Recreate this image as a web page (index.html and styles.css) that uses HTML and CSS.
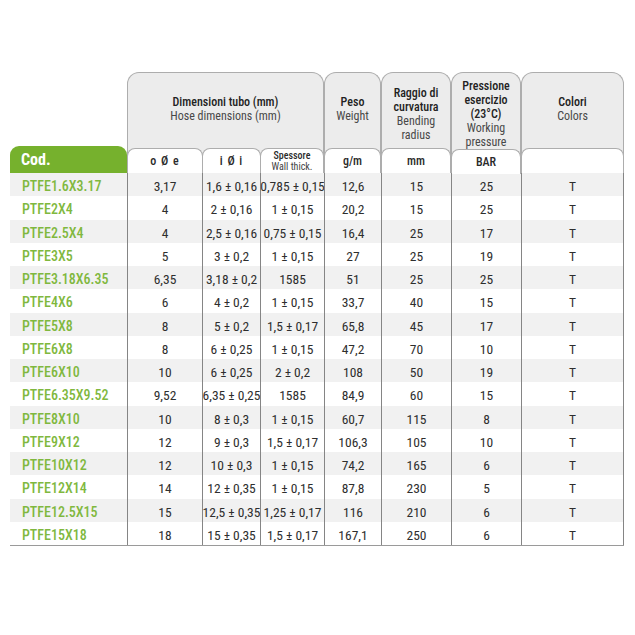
FILE: index.html
```html
<!DOCTYPE html>
<html lang="it">
<head>
<meta charset="utf-8">
<title>PTFE</title>
<link rel="stylesheet" href="styles.css">
</head>
<body>
<div class="sheet">
  <div class="head">
    <div class="cod-cell"><div class="cod">Cod.</div></div>
    <div class="grp">
      <div class="title t2"><b>Dimensioni tubo (mm)</b><span>Hose dimensions (mm)</span></div>
      <div class="subs">
        <div class="sub s-oe">o Ø e</div>
        <div class="sub s-ii">i Ø i</div>
        <div class="sub s-sp small"><b>Spessore</b><span>Wall thick.</span></div>
      </div>
    </div>
    <div class="grp">
      <div class="title t2"><b>Peso</b><span>Weight</span></div>
      <div class="subs"><div class="sub s-full">g/m</div></div>
    </div>
    <div class="grp">
      <div class="title t4"><b>Raggio di</b><b>curvatura</b><span>Bending</span><span>radius</span></div>
      <div class="subs"><div class="sub s-full">mm</div></div>
    </div>
    <div class="grp">
      <div class="title t5"><b>Pressione</b><b>esercizio</b><b>(23°C)</b><span>Working</span><span>pressure</span></div>
      <div class="subs"><div class="sub s-full">BAR</div></div>
    </div>
    <div class="grp">
      <div class="title t2"><b>Colori</b><span>Colors</span></div>
      <div class="subs"><div class="sub s-full"></div></div>
    </div>
  </div>
  <div class="body">
    <div class="row"><div class="c code">PTFE1.6X3.17</div><div class="c">3,17</div><div class="c">1,6 ± 0,16</div><div class="c">0,785 ± 0,15</div><div class="c">12,6</div><div class="c">15</div><div class="c">25</div><div class="c">T</div></div>
    <div class="row"><div class="c code">PTFE2X4</div><div class="c">4</div><div class="c">2 ± 0,16</div><div class="c">1 ± 0,15</div><div class="c">20,2</div><div class="c">15</div><div class="c">25</div><div class="c">T</div></div>
    <div class="row"><div class="c code">PTFE2.5X4</div><div class="c">4</div><div class="c">2,5 ± 0,16</div><div class="c">0,75 ± 0,15</div><div class="c">16,4</div><div class="c">25</div><div class="c">17</div><div class="c">T</div></div>
    <div class="row"><div class="c code">PTFE3X5</div><div class="c">5</div><div class="c">3 ± 0,2</div><div class="c">1 ± 0,15</div><div class="c">27</div><div class="c">25</div><div class="c">19</div><div class="c">T</div></div>
    <div class="row"><div class="c code">PTFE3.18X6.35</div><div class="c">6,35</div><div class="c">3,18 ± 0,2</div><div class="c">1585</div><div class="c">51</div><div class="c">25</div><div class="c">25</div><div class="c">T</div></div>
    <div class="row"><div class="c code">PTFE4X6</div><div class="c">6</div><div class="c">4 ± 0,2</div><div class="c">1 ± 0,15</div><div class="c">33,7</div><div class="c">40</div><div class="c">15</div><div class="c">T</div></div>
    <div class="row"><div class="c code">PTFE5X8</div><div class="c">8</div><div class="c">5 ± 0,2</div><div class="c">1,5 ± 0,17</div><div class="c">65,8</div><div class="c">45</div><div class="c">17</div><div class="c">T</div></div>
    <div class="row"><div class="c code">PTFE6X8</div><div class="c">8</div><div class="c">6 ± 0,25</div><div class="c">1 ± 0,15</div><div class="c">47,2</div><div class="c">70</div><div class="c">10</div><div class="c">T</div></div>
    <div class="row"><div class="c code">PTFE6X10</div><div class="c">10</div><div class="c">6 ± 0,25</div><div class="c">2 ± 0,2</div><div class="c">108</div><div class="c">50</div><div class="c">19</div><div class="c">T</div></div>
    <div class="row"><div class="c code">PTFE6.35X9.52</div><div class="c">9,52</div><div class="c">6,35 ± 0,25</div><div class="c">1585</div><div class="c">84,9</div><div class="c">60</div><div class="c">15</div><div class="c">T</div></div>
    <div class="row"><div class="c code">PTFE8X10</div><div class="c">10</div><div class="c">8 ± 0,3</div><div class="c">1 ± 0,15</div><div class="c">60,7</div><div class="c">115</div><div class="c">8</div><div class="c">T</div></div>
    <div class="row"><div class="c code">PTFE9X12</div><div class="c">12</div><div class="c">9 ± 0,3</div><div class="c">1,5 ± 0,17</div><div class="c">106,3</div><div class="c">105</div><div class="c">10</div><div class="c">T</div></div>
    <div class="row"><div class="c code">PTFE10X12</div><div class="c">12</div><div class="c">10 ± 0,3</div><div class="c">1 ± 0,15</div><div class="c">74,2</div><div class="c">165</div><div class="c">6</div><div class="c">T</div></div>
    <div class="row"><div class="c code">PTFE12X14</div><div class="c">14</div><div class="c">12 ± 0,35</div><div class="c">1 ± 0,15</div><div class="c">87,8</div><div class="c">230</div><div class="c">5</div><div class="c">T</div></div>
    <div class="row"><div class="c code">PTFE12.5X15</div><div class="c">15</div><div class="c">12,5 ± 0,35</div><div class="c">1,25 ± 0,17</div><div class="c">116</div><div class="c">210</div><div class="c">6</div><div class="c">T</div></div>
    <div class="row"><div class="c code">PTFE15X18</div><div class="c">18</div><div class="c">15 ± 0,35</div><div class="c">1,5 ± 0,17</div><div class="c">167,1</div><div class="c">250</div><div class="c">6</div><div class="c">T</div></div>
  </div>
</div>
</body>
</html>
```
FILE: styles.css
```css
html, body {
  margin: 0;
  padding: 0;
  background: #ffffff;
}
body {
  font-family: "Roboto Condensed", "Liberation Sans Narrow", "Roboto", sans-serif;
  font-stretch: condensed;
  color: #333333;
}
.sheet {
  padding: 72px 0 0 10px;
  width: 614px;
}
.head {
  display: grid;
  grid-template-columns: 117px 197px 57px 70px 70px 103px;
  height: 101px;
}
.cod-cell {
  display: flex;
  flex-direction: column;
  justify-content: flex-end;
}
.cod {
  height: 27px;
  background: #76b12d;
  border-radius: 9px 9px 0 0;
  color: #ffffff;
  font-weight: 700;
  font-size: 16px;
  line-height: 28px;
  padding-left: 11px;
}
.grp {
  box-sizing: border-box;
  height: 101px;
  border: 1px solid #adadad;
  border-bottom: none;
  border-radius: 12px 12px 0 0;
  background: #ececec;
  display: flex;
  flex-direction: column;
}
.title {
  flex: 1;
  display: flex;
  flex-direction: column;
  align-items: center;
  justify-content: center;
  text-align: center;
  font-size: 12px;
  line-height: 14px;
}
.title b {
  font-weight: 500;
  color: #222222;
}
.title span {
  font-weight: 400;
  color: #484848;
}
.t2 { padding-bottom: 4px; }
.t4 { padding-top: 7px; }
.t5 { padding-top: 6px; }
.subs {
  display: flex;
  margin: 0 -1px;
}
.sub {
  box-sizing: border-box;
  height: 25px;
  background: #ffffff;
  border: 1px solid #adadad;
  border-bottom: none;
  border-radius: 8px 8px 0 0;
  display: flex;
  flex-direction: column;
  align-items: center;
  justify-content: center;
  font-size: 12px;
  font-weight: 500;
  color: #2a2a2a;
}
.s-oe { width: 76px; letter-spacing: 1px; }
.s-ii { width: 59px; margin-left: -1px; letter-spacing: 1px; }
.s-sp { width: 64px; margin-left: -1px; }
.s-full { width: 100%; }
.small {
  font-size: 10px;
  line-height: 11px;
}
.small b { font-weight: 500; }
.small span { font-weight: 400; color: #444444; }
.body {
  border-bottom: 1px solid #9a9a9a;
}
.row {
  display: grid;
  grid-template-columns: 117px 75px 58px 64px 57px 70px 70px 103px;
  height: 23.25px;
}
.row:nth-child(odd) {
  background: #f1f1f1;
}
.c {
  box-sizing: border-box;
  border-left: 1px solid #858585;
  display: flex;
  align-items: center;
  justify-content: center;
  padding-top: 3px;
  font-size: 13.5px;
  color: #2e2e2e;
  white-space: nowrap;
}
.c:last-child {
  border-right: 1px solid #858585;
}
.c.code {
  border-left: none;
  justify-content: flex-start;
  padding-left: 12px;
  color: #80b83e;
  font-weight: 500;
  font-size: 14px;
}
```
